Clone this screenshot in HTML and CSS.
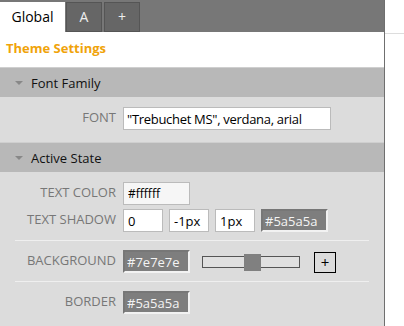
FILE: index.html
```html
<!DOCTYPE html>
<html>
<head>
  <title>Theme Settings</title>
  <link rel="stylesheet" href="styles.css">
</head>
<body>
  <div class="side-line"></div>
  <div class="panel">
    <div class="tabs">
      <div class="tab active">Global</div>
      <div class="tab">A</div>
      <div class="tab">+</div>
    </div>

    <div class="title">Theme Settings</div>

    <div class="section-head"><span class="arrow"></span>Font Family</div>
    <div class="section-body">
      <div class="row">
        <label>FONT</label>
        <input class="text wide" type="text" value='"Trebuchet MS", verdana, arial'>
      </div>
    </div>

    <div class="section-head"><span class="arrow"></span>Active State</div>
    <div class="section-body">
      <div class="row">
        <label>TEXT COLOR</label>
        <input class="text color-light" type="text" value="#ffffff">
      </div>
      <div class="row tight">
        <label>TEXT SHADOW</label>
        <input class="text small" type="text" value="0">
        <input class="text small" type="text" value="-1px">
        <input class="text small" type="text" value="1px">
        <input class="text swatch" type="text" value="#5a5a5a">
      </div>
      <div class="sep"></div>
      <div class="row">
        <label>BACKGROUND</label>
        <input class="text swatch" type="text" value="#7e7e7e">
        <div class="slider"><div class="thumb"></div></div>
        <button class="add">+</button>
      </div>
      <div class="sep"></div>
      <div class="row">
        <label>BORDER</label>
        <input class="text swatch" type="text" value="#5a5a5a">
      </div>
    </div>
  </div>
</body>
</html>
```

FILE: styles.css
```css
body {
  margin: 0;
  background-color: #fff;
  font-family: "Open Sans", "Noto Sans", Arial, sans-serif;
  font-size: 13px;
  position: relative;
}

.side-line {
  position: absolute;
  left: 385px;
  top: 33px;
  width: 19px;
  height: 1px;
  background-color: #ddd;
}

.panel {
  width: 384px;
  height: 326px;
  border-right: 1px solid #6f6f6f;
  background-color: #dcdcdc;
  overflow: hidden;
}

.tabs {
  display: flex;
  height: 30px;
  padding-top: 2px;
  background-color: #777;
  border-top: 1px solid #444;
  margin-top: -1px;
}

.tab {
  width: 34px;
  height: 28px;
  margin-left: 2px;
  border: 1px solid #555;
  background-color: #666;
  color: #eee;
  text-align: center;
  line-height: 28px;
  font-size: 14px;
}

.tab.active {
  width: 65px;
  height: 30px;
  margin-left: 0;
  border: none;
  background-color: #fff;
  color: #000;
  line-height: 30px;
}

.tab.active + .tab {
  margin-left: 1px;
}

.title {
  height: 35px;
  line-height: 32px;
  padding-left: 6px;
  background-color: #fff;
  color: #f0a30a;
  font-weight: bold;
  font-size: 13px;
}

.section-head {
  display: flex;
  align-items: center;
  height: 29px;
  border-top: 1px solid #cfcfcf;
  background-color: #b8b8b8;
  color: #111;
  font-size: 13px;
  padding-left: 15px;
}

.arrow {
  width: 0;
  height: 0;
  border-left: 4px solid transparent;
  border-right: 4px solid transparent;
  border-top: 4px solid #888;
  margin-right: 8px;
}

.section-body {
  padding: 10px 0 12px;
}

.row {
  display: flex;
  align-items: flex-start;
  gap: 6px;
}

.row.tight {
  margin-top: 4px;
}

.row label {
  width: 116px;
  margin-right: 1px;
  text-align: right;
  color: #777;
  font-size: 13px;
  line-height: 20px;
}

.text {
  box-sizing: border-box;
  height: 23px;
  padding: 0 4px;
  border: 1px solid #bbb;
  background-color: #fff;
  color: #000;
  font-family: "Open Sans", "Noto Sans", Arial, sans-serif;
  font-size: 13px;
}

.text.wide {
  width: 208px;
  padding: 0 3px;
  letter-spacing: -0.3px;
}

.text.color-light {
  width: 67px;
  background-color: #f6f6f6;
  font-size: 12px;
}

.text.small {
  width: 40px;
}

.text.swatch {
  width: 67px;
  border: 2px solid;
  border-color: #777 #f2f2f2 #f2f2f2 #777;
  background-color: #7e7e7e;
  color: #f4f4f4;
  padding: 0 2px;
}

.sep {
  height: 1px;
  margin: 8px 15px 9px;
  background-color: #efefef;
}

.slider {
  position: relative;
  box-sizing: border-box;
  width: 98px;
  height: 12px;
  margin: 6px 0 0 6px;
  border: 1px solid #555;
  background-color: #e0e0e0;
}

.thumb {
  position: absolute;
  left: 41px;
  top: -3px;
  width: 17px;
  height: 17px;
  background-color: #808080;
}

.add {
  width: 22px;
  height: 21px;
  margin: 2px 0 0 8px;
  padding: 0;
  border: 1px solid #000;
  background-color: transparent;
  color: #000;
  font-family: "Open Sans", Arial, sans-serif;
  font-size: 15px;
  line-height: 17px;
}
```
